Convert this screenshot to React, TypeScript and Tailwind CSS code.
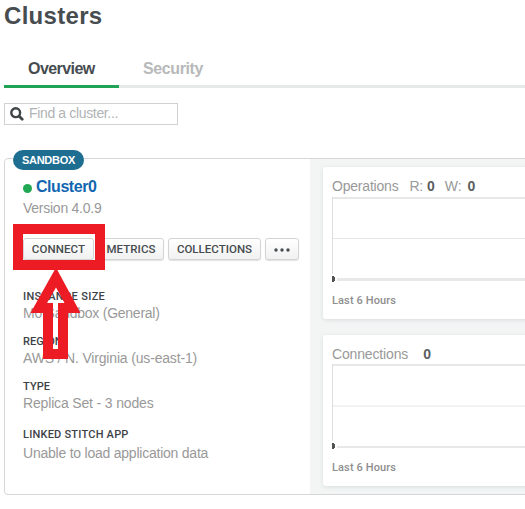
import React from "react";

const sans = "font-['Liberation_Sans',Arial,sans-serif]";
const label = "font-['Roboto',sans-serif] font-medium";

function Detail({ title, value, titleClass, valueClass, className }: {
  title: string; value: string; titleClass: string; valueClass: string; className: string;
}) {
  return (
    <div className={className}>
      <dt className={`${label} text-[11px] leading-[14px] text-[#3d4247] ${titleClass}`}>{title}</dt>
      <dd className={`text-[14px] leading-[16px] text-[#999] ${valueClass}`}>{value}</dd>
    </div>
  );
}

function ToolButton({ children, className }: { children: React.ReactNode; className: string }) {
  return (
    <button
      className={`${label} flex h-[22px] shrink-0 items-center justify-center rounded-[3px] border border-[#d3d4d5] bg-linear-to-b from-white to-[#f1f1f1] pt-px text-[11.5px] text-[#464c4f] shadow-[0_1px_1px_#e2e2e2] ${className}`}
    >
      {children}
    </button>
  );
}

function ChartCard({ children, height, headHeight, middle, baseline }: {
  children: React.ReactNode; height: string; headHeight: string; middle: React.ReactNode; baseline: string;
}) {
  return (
    <section className={`w-[220px] rounded-[3px] bg-white pl-[9px] shadow-[0_1px_4px_#d9dddd] ${height}`}>
      <div className={`flex items-baseline pt-[11px] text-[14px] leading-[16px] text-[#999] ${headHeight}`}>{children}</div>
      <svg className="block" width="211" height="86" viewBox="0 0 211 86" shapeRendering="crispEdges">
        <path d="M0 0h211v2H0z" fill="#e8e8e8" />
        <path d="M0 0h1v77H0z" fill="#dedede" />
        {middle}
        <path d={baseline} fill="#e7e8e8" />
        <path d="M0 79h2v1h1v4h-1v1H0z" fill="#4f5354" />
      </svg>
      <p className={`${label} mt-[11px] text-[11px] leading-[14px] tracking-[0.12px] text-[#8e8e8e]`}>Last 6 Hours</p>
    </section>
  );
}

export default function App() {
  return (
    <main className={`h-[509px] w-[525px] overflow-hidden bg-white pl-[4px] ${sans}`}>
      <h1 className="h-[49px] pt-[1px] text-[24px] font-bold leading-[30px] tracking-[0.3px] text-[#464c4f]">Clusters</h1>

      <nav className="flex h-[39px] border-b-[3px] border-[#e7e8e8] text-[16px] font-bold leading-[18px]">
        <a className="h-[39px] w-[115px] border-b-[3px] border-[#21a356] pl-[24px] pt-[11px] tracking-[-0.55px] text-[#464c4f]">Overview</a>
        <a className="pl-[24px] pt-[11px] tracking-[-0.4px] text-[#b8b9ba]">Security</a>
      </nav>

      <label className="mt-[15px] flex h-[22px] w-[174px] items-center border border-[#cfd1d4] pl-[5px]">
        <svg width="14" height="14" viewBox="0 0 14 14" fill="none" stroke="#3f4447">
          <circle cx="5.7" cy="5.7" r="4.4" strokeWidth="2.4" />
          <path d="M9.2 9.2l3 3" strokeWidth="2.8" strokeLinecap="round" />
        </svg>
        <span className="ml-[5px] mt-[-2px] text-[14px] leading-[18px] tracking-[-0.35px] text-[#b1b3b5]">Find a cluster...</span>
      </label>

      <div className="relative mt-[33px] flex h-[337px] w-[540px] rounded-[4px] border border-[#d5d6d7]">
        <span className="absolute left-[8px] top-[-9px] flex h-[20px] w-[71px] items-center justify-center rounded-full bg-[#1e6e91] text-[11px] font-bold tracking-[-0.3px] text-white">SANDBOX</span>

        <section className="w-[305px] shrink-0 pl-[18px] pt-[19px]">
          <div className="flex h-[18px] items-center">
            <span className="mt-[3px] size-[9px] rounded-full bg-[#20a952]" />
            <h2 className="ml-[4px] text-[16px] font-bold leading-[18px] tracking-[-0.45px] text-[#1266b1]">Cluster0</h2>
          </div>
          <p className="mt-[4px] text-[14px] leading-[16px] tracking-[-0.25px] text-[#999]">Version 4.0.9</p>
          <div className="mt-[22px] flex gap-[4px]">
            <ToolButton className="w-[71px] tracking-[0.1px]">CONNECT</ToolButton>
            <ToolButton className="w-[66px] tracking-[0.05px]">METRICS</ToolButton>
            <ToolButton className="w-[93px] tracking-[0.02px]">COLLECTIONS</ToolButton>
            <ToolButton className="w-[34px]">
              <svg width="16" height="4" viewBox="0 0 16 4" fill="#464c4f">
                <circle cx="2" cy="2" r="1.7" /><circle cx="8" cy="2" r="1.7" /><circle cx="14" cy="2" r="1.7" />
              </svg>
            </ToolButton>
          </div>
          <dl>
            <Detail className="mt-[30px] h-[45px]" title="INSTANCE SIZE" value="M0 Sandbox (General)" titleClass="tracking-[0.35px]" valueClass="mt-[1px] tracking-[-0.25px]" />
            <Detail className="h-[45px]" title="REGION" value="AWS / N. Virginia (us-east-1)" titleClass="tracking-[0.1px]" valueClass="mt-[1px] tracking-[-0.17px]" />
            <Detail className="h-[48px]" title="TYPE" value="Replica Set - 3 nodes" titleClass="tracking-[0.1px]" valueClass="mt-[1px] tracking-[-0.16px]" />
            <Detail className="h-[48px]" title="LINKED STITCH APP" value="Unable to load application data" titleClass="tracking-[0.22px]" valueClass="mt-[3px] tracking-[-0.23px]" />
          </dl>
        </section>

        <section className="flex flex-1 flex-col gap-[16px] bg-[#f3f5f5] pl-[13px] pt-[8px]">
          <ChartCard
            height="h-[152px]"
            headHeight="h-[30px]"
            middle={<path d="M1 41h210v1H1z" fill="#e6e6e6" />}
            baseline="M5 81h206v3H5z"
          >
            <span className="tracking-[-0.2px]">Operations</span>
            <span className="ml-[11px] tracking-[-0.3px]">R:</span>
            <b className="ml-[4px] text-[#5b5f60]">0</b>
            <span className="ml-[10px]">W:</span>
            <b className="ml-[6px] text-[#5b5f60]">0</b>
          </ChartCard>
          <ChartCard
            height="h-[151px]"
            headHeight="h-[29px]"
            middle={<path d="M1 41h210v2H1z" fill="#f1f2f2" />}
            baseline="M5 82h206v2H5z"
          >
            <span className="tracking-[-0.15px]">Connections</span>
            <b className="ml-[15px] text-[#5b5f60]">0</b>
          </ChartCard>
        </section>

        <div className="absolute left-[8px] top-[65px] h-[46px] w-[92px] border-[10px] border-[#ed1c24]" />
        <svg className="absolute left-[25px] top-[109px]" width="52" height="92" viewBox="30 268 52 92">
          <path fill="#ed1c24" fillRule="evenodd" d="M56 267.5L80.5 313H68V359H43V313H30.5ZM56 287.5L47 303H53V349H58V303H64.5Z" />
        </svg>
      </div>
    </main>
  );
}
